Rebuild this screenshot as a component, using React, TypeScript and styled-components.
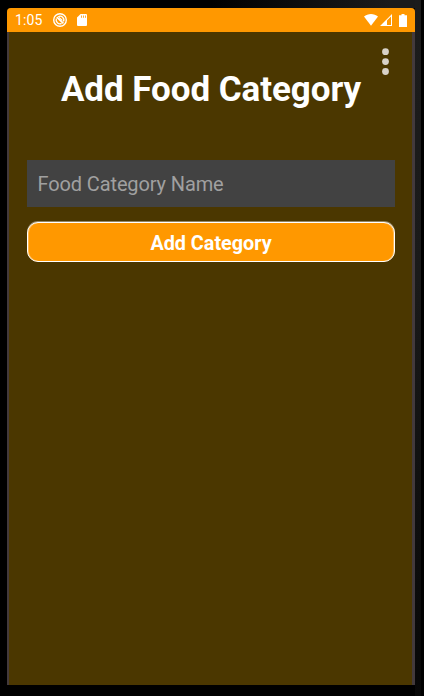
import React from "react";
import styled, { createGlobalStyle } from "styled-components";

const GlobalStyle = createGlobalStyle`
  *, *::before, *::after { box-sizing: border-box; }
  html, body { margin: 0; background: #000; }
  body { font-family: Roboto, "Liberation Sans", sans-serif; }
`;

const Bezel = styled.div`
  height: 696px;
  padding: 8px 9px 11px 7px;
  overflow: hidden;
  background:
    linear-gradient(#000, #000) right / 3px 100% no-repeat,
    linear-gradient(#1c1c1c 0%, #1a1a1a 40%, #070707 100%) right / 9px 100% no-repeat,
    linear-gradient(90deg, #000 50%, #1b1b1b 92%) top / 100% 8px no-repeat,
    #000;
`;

const Screen = styled.div`
  height: 677px;
  display: flex;
  flex-direction: column;
  border-radius: 4px 4px 0 0;
  overflow: hidden;
  background: #4b3700;
`;

const StatusBar = styled.header`
  height: 24px;
  flex: none;
  display: flex;
  align-items: center;
  padding: 0 8px 0 8px;
  background: #ff9800;
  color: #fff;
  svg { display: block; flex: none; }
`;

const Clock = styled.span`
  width: 38px;
  font-size: 14px;
  line-height: 24px;
  letter-spacing: 0.15px;
`;

const IconGroup = styled.div<{ $gap: number; $end?: boolean }>`
  display: flex;
  align-items: center;
  gap: ${(p) => p.$gap}px;
  margin-left: ${(p) => (p.$end ? "auto" : "0")};
`;

const Page = styled.main`
  flex: 1;
  border: solid #433a3c;
  border-width: 0 3px 0 2px;
  padding: 0 17px 0 18px;
`;

const TitleArea = styled.div`
  height: 128px;
  padding-top: 37px;
  position: relative;
`;

const Title = styled.h1`
  margin: 0;
  text-align: center;
  white-space: nowrap;
  font-size: 35px;
  line-height: 42px;
  letter-spacing: -0.06px;
  font-weight: 700;
  color: #fff;
`;

const MenuButton = styled.button`
  position: absolute;
  top: 16px;
  right: 5px;
  width: 9px;
  height: 28px;
  padding: 0;
  border: 0;
  background: none;
  svg { display: block; }
`;

const NameInput = styled.input`
  display: block;
  width: 100%;
  height: 47px;
  padding: 1px 10px 0 10.5px;
  border: 0;
  border-radius: 0;
  outline: none;
  background: #424242;
  color: #fff;
  font: 400 20px Roboto, "Liberation Sans", sans-serif;
  letter-spacing: -0.12px;
  &::placeholder { color: #a0a0a0; opacity: 1; }
`;

const SubmitButton = styled.button`
  display: block;
  width: 100%;
  height: 40px;
  margin-top: 15px;
  padding: 2px 0 0;
  border: 1px solid #fff;
  border-radius: 11px;
  box-shadow:
    0 -1px 0 rgba(255, 255, 255, 0.4),
    inset 1px 0 0 rgba(255, 255, 255, 0.3),
    inset -1px 0 0 rgba(255, 255, 255, 0.3);
  background: #ff9800;
  color: #fff;
  font: 700 19.8px Roboto, "Liberation Sans", sans-serif;
`;

export default function App() {
  return (
    <Bezel>
      <GlobalStyle />
      <Screen>
        <StatusBar>
          <Clock>1:05</Clock>
          <IconGroup $gap={10}>
            <svg width="14" height="14" viewBox="0 0 14 14" fill="none" stroke="#fff">
              <circle cx="7" cy="7" r="6.3" strokeWidth="1.4" />
              <path d="M8.6 10.4A3.8 3.8 0 0 1 3.4 5.6M5.2 3.7A3.8 3.8 0 0 1 10.5 8.6" strokeWidth="1.3" />
              <path d="M3.8 4.2l6.6 6.2" strokeWidth="1.7" />
              <path d="M6 4.3l3.4 3.2" strokeWidth="1.1" />
            </svg>
            <svg width="10" height="12" viewBox="0 0 10 12">
              <path fill="#fff" d="M3.6 0H9a1 1 0 0 1 1 1v10a1 1 0 0 1-1 1H1a1 1 0 0 1-1-1V3.6z" />
              <path stroke="#ff9800" strokeWidth="0.8" d="M4.5 1.5v2.3M6.5 1.5v2.3M8.5 1.5v2.3" />
            </svg>
          </IconGroup>
          <IconGroup $gap={2} $end>
            <svg width="14" height="12" viewBox="0 0 14 12">
              <path fill="#fff" d="M0 2.6C3.8-.8 10.2-.8 14 2.6L7 11.8z" />
            </svg>
            <svg width="12" height="12" viewBox="0 0 12 12">
              <path fill="#fff" fillRule="evenodd" d="M0 12L12 0v12zM7 6.5V11h4V2.6z" />
            </svg>
            <svg width="13" height="13" viewBox="0 0 13 13">
              <path fill="#fff" d="M7.5 0h3v1.2H13V13H5V1.2h2.5z" />
            </svg>
          </IconGroup>
        </StatusBar>
        <Page>
          <TitleArea>
            <Title>Add Food Category</Title>
            <MenuButton aria-label="More options">
              <svg width="9" height="28" viewBox="0 0 9 28" fill="#d8d2c9">
                <circle cx="4.5" cy="3.7" r="3.4" />
                <circle cx="4.5" cy="13.6" r="3.4" />
                <circle cx="4.5" cy="23.5" r="3.4" />
              </svg>
            </MenuButton>
          </TitleArea>
          <NameInput placeholder="Food Category Name" />
          <SubmitButton>Add Category</SubmitButton>
        </Page>
      </Screen>
    </Bezel>
  );
}
